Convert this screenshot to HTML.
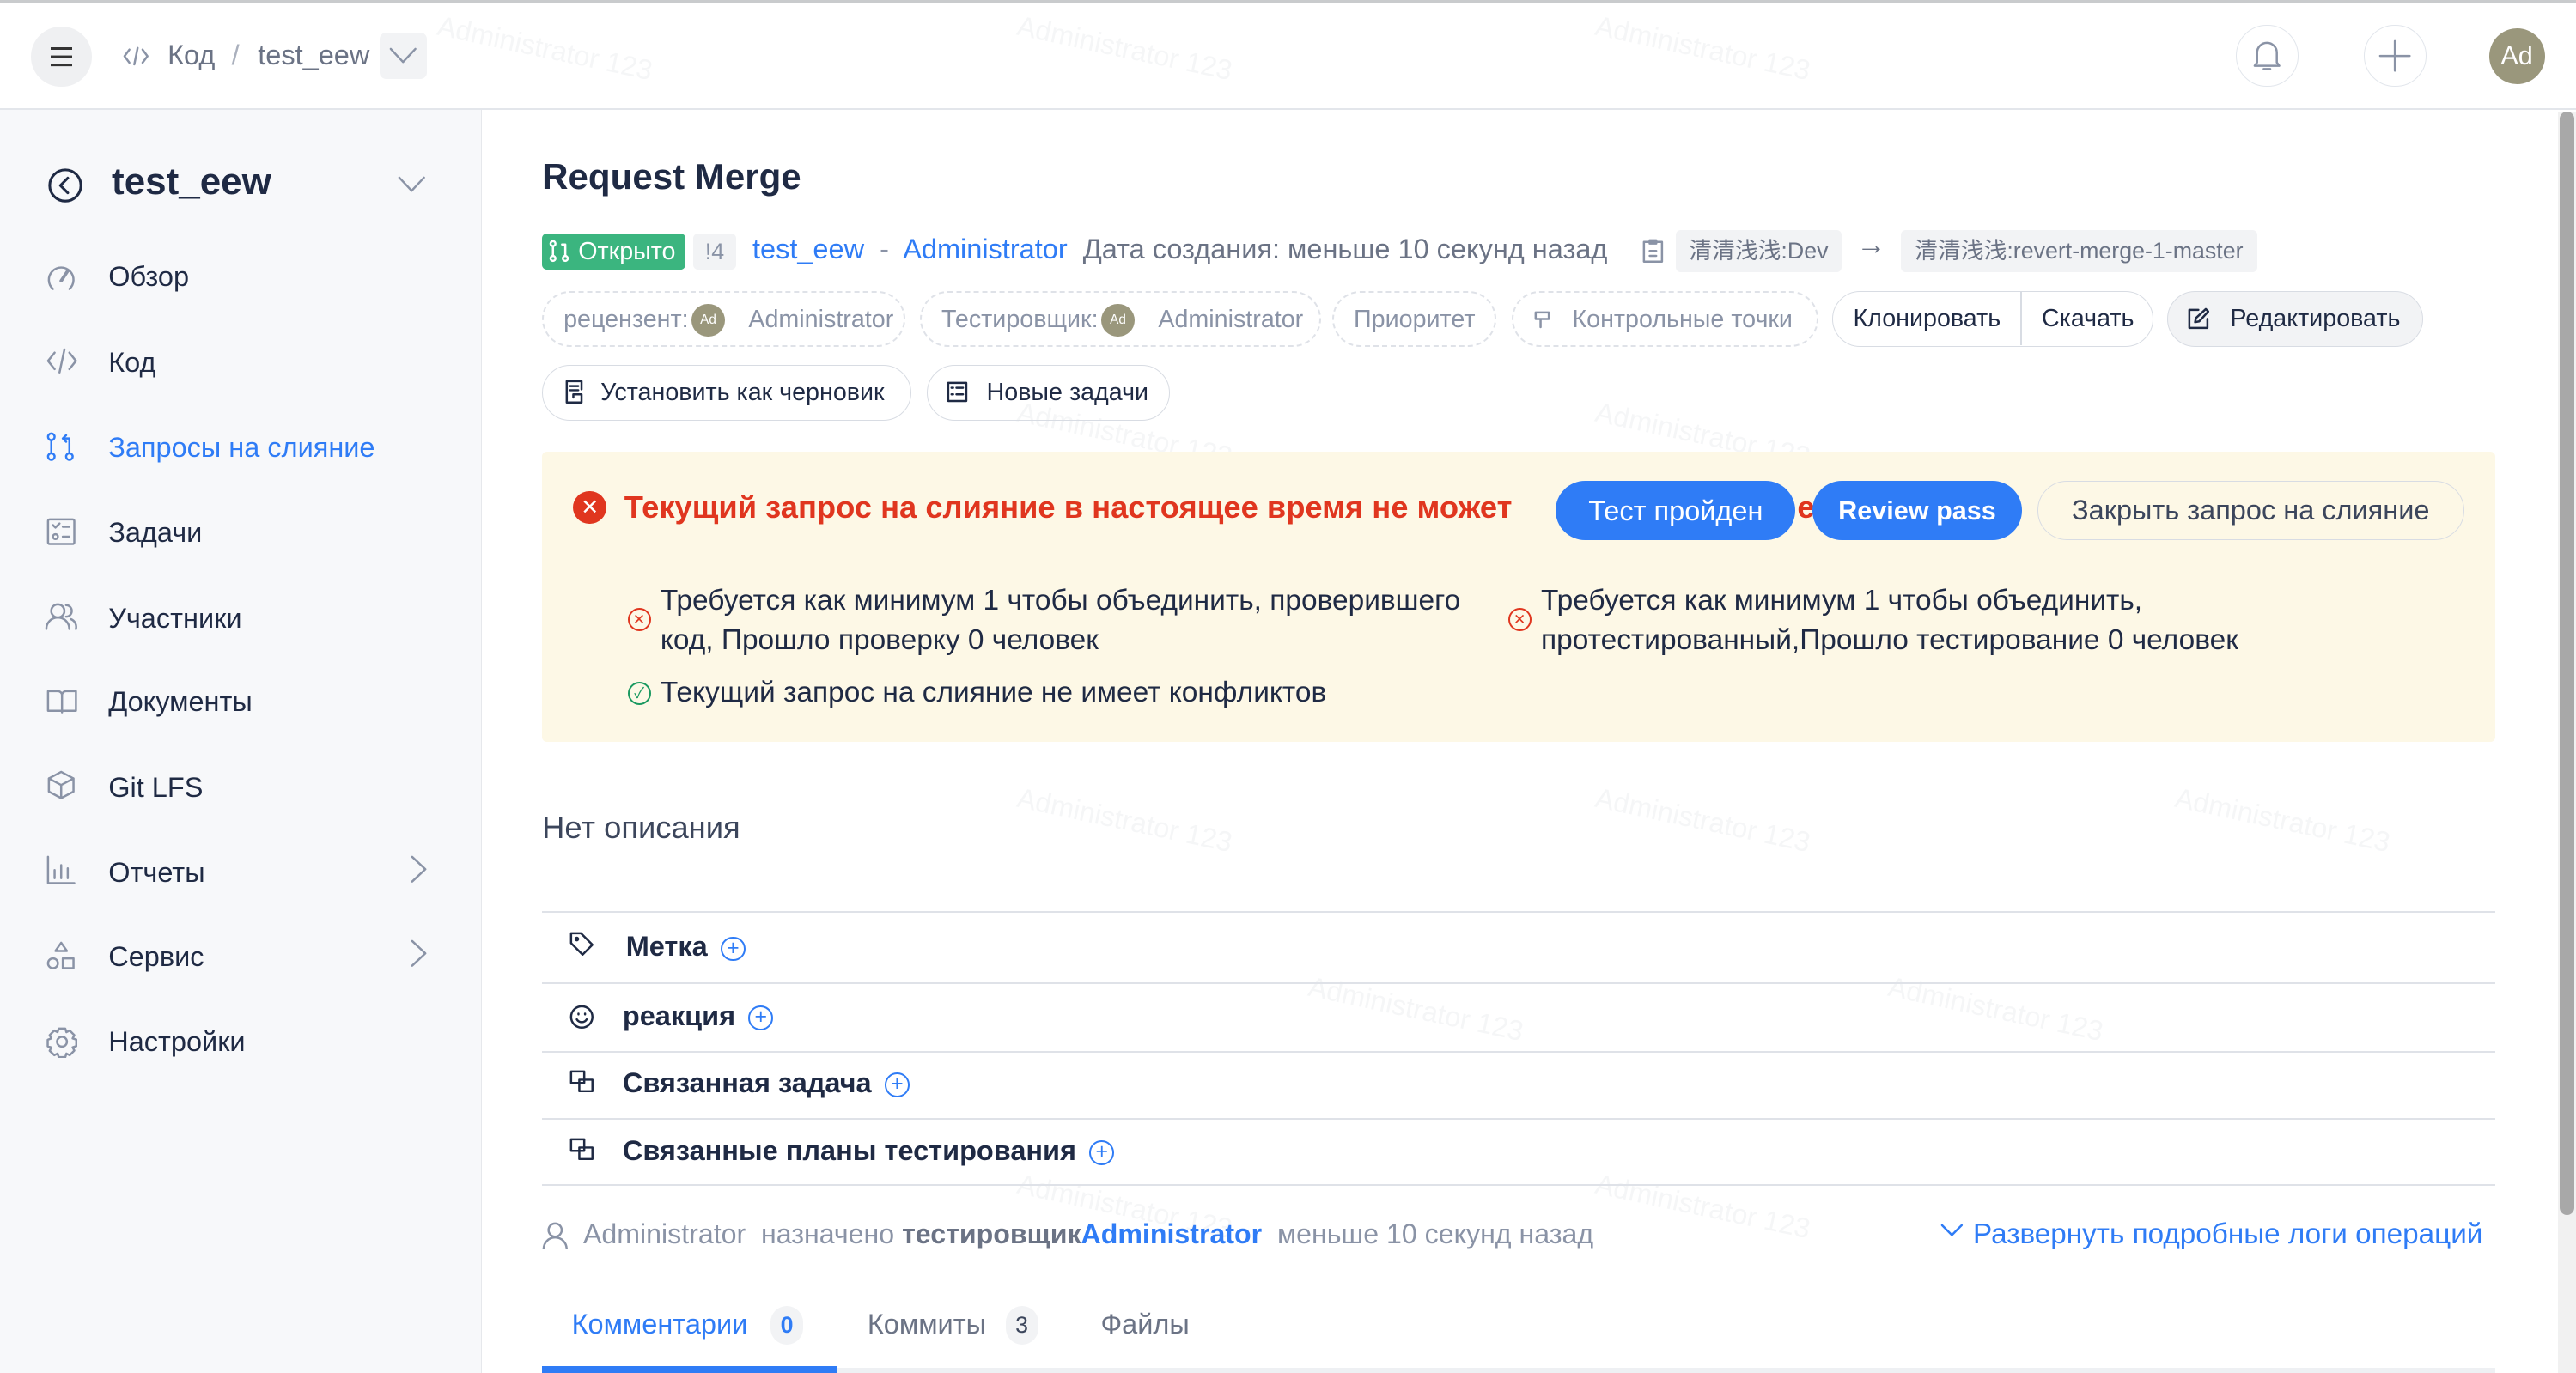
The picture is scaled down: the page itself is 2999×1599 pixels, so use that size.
<!DOCTYPE html>
<html><head><meta charset="utf-8"><style>
html,body{margin:0;padding:0;overflow:hidden;background:#fff}
#r{zoom:1.9126;width:1568px;height:836px;position:relative;font-family:"Liberation Sans","Noto Sans CJK SC",sans-serif;color:#1f2a44;overflow:hidden}
.a{position:absolute;white-space:nowrap}
svg{position:absolute;fill:none;stroke:#8a93a6;stroke-width:1.3;stroke-linecap:round;stroke-linejoin:round}
.btn{position:absolute;height:34px;border:1px solid #d8dce3;border-radius:18px;box-sizing:border-box;font-size:15px;line-height:32px;padding:0 12px;white-space:nowrap}
.dash{border:1.5px dashed #dfe2e8;color:#8a93a6}
.av{display:inline-block;width:20px;height:20px;border-radius:50%;background:#9a977c;color:#fff;font-size:8px;line-height:20px;text-align:center;vertical-align:middle;margin:0 2px}
.nav{position:absolute;left:66px;font-size:17px;color:#1f2a44;margin-top:1px}
.hl{position:absolute;left:330px;width:1189px;height:1px;background:#dfe2e8}
.sec{position:absolute;font-size:17px;font-weight:bold;color:#1f2a44;margin-top:1px}
.plus{display:inline-block;width:13px;height:13px;border:1.3px solid #2f7cf6;border-radius:50%;color:#2f7cf6;font-size:13px;line-height:12px;text-align:center;font-weight:normal;vertical-align:1px;margin-left:8px}
.wm{position:absolute;color:#f5f6f7;font-size:17px;transform:rotate(12deg);white-space:nowrap}
</style></head><body><div id="r">
<div class="wm" style="left:265px;top:20px">Administrator 123</div>
<div class="wm" style="left:618px;top:20px">Administrator 123</div>
<div class="wm" style="left:970px;top:20px">Administrator 123</div>
<div class="wm" style="left:618px;top:255px">Administrator 123</div>
<div class="wm" style="left:970px;top:255px">Administrator 123</div>
<div class="wm" style="left:618px;top:490px">Administrator 123</div>
<div class="wm" style="left:970px;top:490px">Administrator 123</div>
<div class="wm" style="left:1323px;top:490px">Administrator 123</div>
<div class="wm" style="left:795px;top:605px">Administrator 123</div>
<div class="wm" style="left:1148px;top:605px">Administrator 123</div>
<div class="wm" style="left:618px;top:725px">Administrator 123</div>
<div class="wm" style="left:970px;top:725px">Administrator 123</div>

<div class="a" style="left:0;top:0;width:1568px;height:2px;background:#c9cbcd"></div>
<div class="a" style="left:0;top:66px;width:1568px;height:1px;background:#e3e6eb"></div>
<div class="a" style="left:19px;top:16px;width:37px;height:37px;border-radius:50%;background:#eff0f2"></div>
<div class="a" style="left:31px;top:29px;width:13px;height:1.5px;background:#333;box-shadow:0 5px 0 #333,0 10px 0 #333"></div>
<svg style="left:75px;top:27px" width="16" height="14" viewBox="0 0 16 14"><path d="M4 3L1 7l3 4M12 3l3 4-3 4M9 2L7 12"/></svg>
<div class="a" style="left:102px;top:24px;font-size:17px;color:#6b7385">Код</div>
<div class="a" style="left:141px;top:24px;font-size:17px;color:#aab0bd">/</div>
<div class="a" style="left:157px;top:24px;font-size:17px;color:#6b7385">test_eew</div>
<div class="a" style="left:231px;top:20px;width:29px;height:28px;border-radius:4px;background:#f2f3f5"></div>
<svg style="left:237px;top:29px" width="17" height="10" viewBox="0 0 17 10"><path d="M1 1l7.5 8L16 1"/></svg>
<div class="a" style="left:1361px;top:15px;width:37px;height:37px;border-radius:50%;border:1px solid #e2e6ec"></div>
<svg style="left:1371px;top:24px" width="18" height="20" viewBox="0 0 18 20"><path d="M3 14V8a6 6 0 0112 0v6l1.5 2h-15z M7 18h4"/></svg>
<div class="a" style="left:1439px;top:15px;width:37px;height:37px;border-radius:50%;border:1px solid #e2e6ec"></div>
<svg style="left:1448px;top:24px" width="20" height="20" viewBox="0 0 20 20"><path d="M10 1v18M1 10h18"/></svg>
<div class="a" style="left:1515px;top:17px;width:34px;height:34px;border-radius:50%;background:#9a977c;color:#fff;font-size:16px;line-height:34px;text-align:center">Ad</div>

<div class="a" style="left:0;top:67px;width:293px;height:769px;background:#f7f8fa;border-right:1px solid #e6e8ec"></div>
<svg style="left:29px;top:102px;stroke:#1f2a44;stroke-width:1.6" width="22" height="22" viewBox="0 0 22 22"><circle cx="11" cy="11" r="9.5"/><path d="M12.5 6.5L8 11l4.5 4.5"/></svg>
<div class="a" style="left:68px;top:98px;font-size:23px;font-weight:bold;color:#1f2a44">test_eew</div>
<svg style="left:242px;top:107px" width="17" height="10" viewBox="0 0 17 10"><path d="M1 1l7.5 8L16 1"/></svg>
<svg style="left:28px;top:160px" width="18" height="18" viewBox="0 0 18 18"><path d="M4 16A7.5 7.5 0 1114 16"/><path d="M9 11l4-6" style="stroke-width:2"/></svg>
<div class="nav" style="top:158px">Обзор</div>
<svg style="left:28px;top:212px" width="19" height="16" viewBox="0 0 19 16"><path d="M5 3L1 8l4 5M14 3l4 5-4 5M11 1L8 15"/></svg>
<div class="nav" style="top:210px">Код</div>
<svg style="left:28px;top:263px;stroke:#2f7cf6" width="18" height="18" viewBox="0 0 18 18"><circle cx="3" cy="15" r="2"/><circle cx="14" cy="15" r="2"/><circle cx="3" cy="3" r="2"/><path d="M3 5v8M14 13V4h-3M12 2l-2 2 2 2"/></svg>
<div class="nav" style="top:262px;color:#2f7cf6">Запросы на слияние</div>
<svg style="left:28px;top:315px" width="18" height="18" viewBox="0 0 18 18"><rect x="1" y="1.5" width="16" height="15" rx="1"/><path d="M4 5l1.5 1.5L8 4M10 6h4M10 12h4"/><circle cx="5.5" cy="12" r="1.5"/></svg>
<div class="nav" style="top:314px">Задачи</div>
<svg style="left:27px;top:366px" width="20" height="18" viewBox="0 0 20 18"><circle cx="8" cy="6" r="4"/><path d="M1 17a7 7 0 0114 0M13 2.5a3.5 3.5 0 010 7M16 11a5 5 0 013 6"/></svg>
<div class="nav" style="top:366px">Участники</div>
<svg style="left:28px;top:419px" width="19" height="16" viewBox="0 0 19 16"><path d="M1 2h6a2.5 2.5 0 012.5 2.5V15 M18 2h-6a2.5 2.5 0 00-2.5 2.5M1 2v12h17V2"/></svg>
<div class="nav" style="top:417px">Документы</div>
<svg style="left:28px;top:469px" width="18" height="18" viewBox="0 0 18 18"><path d="M9 1l7.5 4v8L9 17l-7.5-4V5zM1.5 5L9 9l7.5-4M9 9v8"/></svg>
<div class="nav" style="top:469px">Git LFS</div>
<svg style="left:28px;top:521px" width="18" height="18" viewBox="0 0 18 18"><path d="M1 1v16h16M5 14V9M9 14V6M13 14V8"/></svg>
<div class="nav" style="top:521px">Отчеты</div>
<svg style="left:250px;top:521px" width="10" height="17" viewBox="0 0 10 17"><path d="M1 1l8 7.5L1 16"/></svg>
<svg style="left:28px;top:573px" width="18" height="18" viewBox="0 0 18 18"><path d="M9 1l3.5 5h-7z"/><circle cx="4" cy="13.5" r="3"/><rect x="10" y="10.5" width="6.5" height="6"/></svg>
<div class="nav" style="top:572px">Сервис</div>
<svg style="left:250px;top:572px" width="10" height="17" viewBox="0 0 10 17"><path d="M1 1l8 7.5L1 16"/></svg>
<svg style="left:28px;top:625px" width="19" height="19" viewBox="0 0 19 19"><path d="M7.5 1.5h4l.7 2.2 2-1 2.8 2.8-1 2 2.2.7v4l-2.2.7 1 2-2.8 2.8-2-1-.7 2.2h-4l-.7-2.2-2 1L2 15l1-2-2.2-.7v-4L3 7.5l-1-2L4.8 2.7l2 1z"/><circle cx="9.5" cy="9.5" r="3"/></svg>
<div class="nav" style="top:624px">Настройки</div>

<div class="a" style="left:330px;top:95px;font-size:22px;font-weight:bold;color:#1f2a44">Request Merge</div>
<div class="a" style="left:330px;top:142px;width:87px;height:22px;border-radius:3px;background:#3bb57f;color:#fff;font-size:15px;line-height:22px;text-indent:22px">Открыто</div>
<svg style="left:334px;top:146px;stroke:#fff" width="13" height="14" viewBox="0 0 13 14"><circle cx="2.5" cy="11.5" r="1.5"/><circle cx="10" cy="11.5" r="1.5"/><circle cx="2.5" cy="2.5" r="1.5"/><path d="M2.5 4v6M10 10V3H8"/></svg>
<div class="a" style="left:422px;top:142px;width:26px;height:22px;border-radius:3px;background:#f2f3f5;color:#8a93a6;font-size:14px;line-height:22px;text-align:center">!4</div>
<div class="a" style="left:458px;top:142px;font-size:17px;color:#2f7cf6">test_eew &nbsp;<span style="color:#8a93a6">-</span>&nbsp; Administrator &nbsp;<span style="color:#6b7385">Дата создания: меньше 10 секунд назад</span></div>
<svg style="left:999px;top:145px" width="14" height="16" viewBox="0 0 14 16"><rect x="1.5" y="2.5" width="11" height="12"/><path d="M5 1.5h4v2H5zM5 8h4M5 11h4"/></svg>
<div class="a" style="left:1020px;top:140px;width:101px;height:26px;border-radius:3px;background:#f2f3f5;color:#6b7385;font-size:14px;line-height:26px;text-align:center">清清浅浅:Dev</div>
<div class="a" style="left:1130px;top:139px;font-size:18px;color:#6b7385">→</div>
<div class="a" style="left:1157px;top:140px;width:217px;height:26px;border-radius:3px;background:#f2f3f5;color:#6b7385;font-size:14px;line-height:26px;text-align:center">清清浅浅:revert-merge-1-master</div>

<div class="btn dash" style="left:330px;top:177px;width:221px;padding:0 12px;line-height:33px">рецензент:<span class="av">Ad</span> &nbsp; Administrator</div>
<div class="btn dash" style="left:560px;top:177px;width:244px;line-height:33px">Тестировщик:<span class="av">Ad</span> &nbsp; Administrator</div>
<div class="btn dash" style="left:811px;top:177px;width:100px;line-height:33px">Приоритет</div>
<div class="btn dash" style="left:920px;top:177px;width:187px;padding-left:36px;line-height:33px">Контрольные точки</div>
<svg style="left:933px;top:188px" width="12" height="12" viewBox="0 0 12 12"><path d="M2 2h8v4H2zM5 6v5"/></svg>
<div class="btn" style="left:1115px;top:177px;width:196px;color:#1f2a44;padding:0;line-height:33px">&nbsp;&nbsp; Клонировать &nbsp;&nbsp;&nbsp;&nbsp; Скачать</div>
<div class="a" style="left:1230px;top:178px;width:1px;height:32px;background:#d8dce3"></div>
<div class="btn" style="left:1319px;top:177px;width:156px;background:#f2f3f5;color:#1f2a44;padding-left:38px;line-height:33px">Редактировать</div>
<svg style="left:1331px;top:187px" width="14" height="14" viewBox="0 0 14 14"><path d="M7 1.5H1.5v11h11V7M5 9l.5-2.5L11.5 1 13 2.5 7.5 8.5z" style="stroke:#1f2a44"/></svg>
<div class="btn" style="left:330px;top:222px;width:225px;color:#1f2a44;padding-left:35px;line-height:33px">Установить как черновик</div>
<svg style="left:343px;top:231px" width="13" height="15" viewBox="0 0 13 15"><path d="M2 1h9v5M2 1v13h9V9H6v2M4 4h5M4 6.5h5" style="stroke:#1f2a44"/></svg>
<div class="btn" style="left:564px;top:222px;width:148px;color:#1f2a44;padding-left:36px;line-height:33px">Новые задачи</div>
<svg style="left:576px;top:232px" width="13" height="13" viewBox="0 0 13 13"><rect x="1" y="1" width="11" height="11" style="stroke:#1f2a44"/><path d="M3 4h1M6 4h4M3 8h1M6 8h4" style="stroke:#1f2a44"/></svg>

<div class="a" style="left:330px;top:275px;width:1189px;height:177px;background:#fdf8e6;border-radius:3px"></div>
<div class="a" style="left:349px;top:299px;width:20px;height:20px;border-radius:50%;background:#e0361f;color:#fff;font-size:13px;line-height:20px;text-align:center">✕</div>
<div class="a" style="left:380px;top:298px;font-size:19px;font-weight:bold;color:#e0361f;width:565px;overflow:hidden">Текущий запрос на слияние в настоящее время не может</div>
<div class="a" style="left:1094px;top:298px;font-size:19px;font-weight:bold;color:#e0361f">е</div>
<div class="a" style="left:947px;top:293px;width:146px;height:36px;border-radius:18px;background:#2f7cf6;color:#fff;font-size:17px;line-height:37px;text-align:center">Тест пройден</div>
<div class="a" style="left:1103px;top:293px;width:128px;height:36px;border-radius:18px;background:#2f7cf6;color:#fff;font-size:16px;font-weight:bold;line-height:37px;text-align:center">Review pass</div>
<div class="a" style="left:1240px;top:293px;width:260px;height:36px;box-sizing:border-box;border:1px solid #d8dce3;border-radius:18px;color:#3c465c;font-size:17px;line-height:35px;text-align:center">Закрыть запрос на слияние</div>
<div class="a" style="left:382px;top:370px;width:12px;height:12px;border:1.2px solid #e0361f;border-radius:50%;color:#e0361f;font-size:9px;line-height:12px;text-align:center">✕</div>
<div class="a" style="left:402px;top:354px;font-size:17.5px;line-height:24px;color:#1f2a44">Требуется как минимум 1 чтобы объединить, проверившего<br>код, Прошло проверку 0 человек</div>
<div class="a" style="left:918px;top:370px;width:12px;height:12px;border:1.2px solid #e0361f;border-radius:50%;color:#e0361f;font-size:9px;line-height:12px;text-align:center">✕</div>
<div class="a" style="left:938px;top:354px;font-size:17.5px;line-height:24px;color:#1f2a44">Требуется как минимум 1 чтобы объединить,<br>протестированный,Прошло тестирование 0 человек</div>
<div class="a" style="left:382px;top:415px;width:12px;height:12px;border:1.2px solid #1a9960;border-radius:50%;color:#1a9960;font-size:9px;line-height:12px;text-align:center">✓</div>
<div class="a" style="left:402px;top:410px;font-size:17.5px;line-height:24px;color:#1f2a44">Текущий запрос на слияние не имеет конфликтов</div>

<div class="a" style="left:330px;top:493px;font-size:19px;color:#3c465c">Нет описания</div>
<div class="hl" style="top:555px"></div>
<svg style="left:346px;top:567px" width="16" height="16" viewBox="0 0 16 16"><path d="M1.5 1.5h6l7 7-6 6-7-7z" style="stroke:#1f2a44"/><circle cx="5" cy="5" r=".8" style="stroke:#1f2a44"/></svg>
<div class="sec" style="left:381px;top:566px">Метка<span class="plus">+</span></div>
<div class="hl" style="top:598px"></div>
<svg style="left:346px;top:611px" width="16" height="16" viewBox="0 0 16 16"><circle cx="8" cy="8" r="6.5" style="stroke:#1f2a44"/><path d="M5 9.5a3.5 3.5 0 006 0M6 6v.5M10 6v.5" style="stroke:#1f2a44"/></svg>
<div class="sec" style="left:379px;top:608px">реакция<span class="plus">+</span></div>
<div class="hl" style="top:640px"></div>
<svg style="left:346px;top:651px" width="16" height="15" viewBox="0 0 16 15"><path d="M1.5 1.5h8v7h-8zM6.5 6.5h8v7h-8z" style="stroke:#1f2a44"/></svg>
<div class="sec" style="left:379px;top:649px">Связанная задача<span class="plus">+</span></div>
<div class="hl" style="top:681px"></div>
<svg style="left:346px;top:692px" width="16" height="15" viewBox="0 0 16 15"><path d="M1.5 1.5h8v7h-8zM6.5 6.5h8v7h-8z" style="stroke:#1f2a44"/></svg>
<div class="sec" style="left:379px;top:690px">Связанные планы тестирования<span class="plus">+</span></div>
<div class="hl" style="top:721px"></div>

<svg style="left:330px;top:744px" width="16" height="17" viewBox="0 0 16 17"><circle cx="8" cy="5" r="4"/><path d="M1 16.5a7 7 0 0114 0"/></svg>
<div class="a" style="left:355px;top:742px;font-size:16.8px;color:#8a93a6">Administrator &nbsp;назначено <b style="color:#6b7385">тестировщик</b><b style="color:#2f7cf6">Administrator</b> &nbsp;меньше 10 секунд назад</div>
<svg style="left:1181px;top:745px;stroke:#2f7cf6" width="14" height="9" viewBox="0 0 14 9"><path d="M1 1l6 6 6-6"/></svg>
<div class="a" style="left:1201px;top:742px;font-size:17.4px;color:#2f7cf6">Развернуть подробные логи операций</div>

<div class="a" style="left:348px;top:797px;font-size:17px;color:#2f7cf6">Комментарии</div>
<div class="a" style="left:469px;top:795px;width:20px;height:24px;border-radius:10px;background:#f2f3f5;color:#2f7cf6;font-size:14px;font-weight:bold;line-height:24px;text-align:center">0</div>
<div class="a" style="left:528px;top:797px;font-size:17px;color:#6b7385">Коммиты</div>
<div class="a" style="left:612px;top:795px;width:20px;height:24px;border-radius:10px;background:#f2f3f5;color:#3c465c;font-size:14px;line-height:24px;text-align:center">3</div>
<div class="a" style="left:670px;top:797px;font-size:17px;color:#6b7385">Файлы</div>
<div class="a" style="left:330px;top:833px;width:1189px;height:3px;background:#eef0f3"></div>
<div class="a" style="left:330px;top:832px;width:179px;height:4px;background:#2f7cf6"></div>

<div class="a" style="left:1557px;top:68px;width:11px;height:768px;background:#f1f1f1"></div>
<div class="a" style="left:1558px;top:68px;width:9px;height:672px;border-radius:5px;background:#a8a8a8"></div>
</div></body></html>
